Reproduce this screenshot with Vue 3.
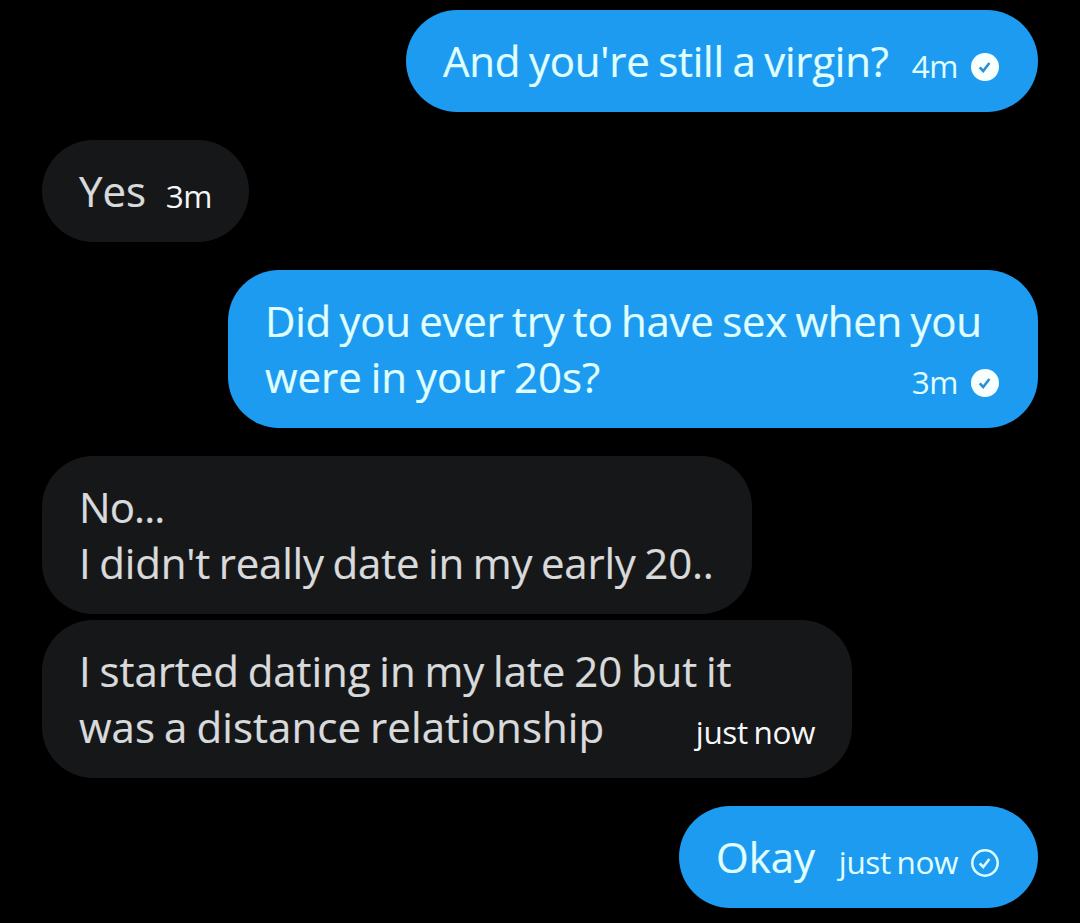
<template>
  <div class="chat">
    <!-- Messages -->
    <div
      v-for="(message, index) in messages"
      :key="index"
      class="bubble"
      :class="[message.sent ? 'sent' : 'received', { grouped: message.grouped }]"
      :style="{ width: message.width + 'px' }"
    >
      <div class="text">
        <div v-for="line in message.lines" :key="line.text">
          <span :style="{ letterSpacing: line.spacing + 'px' }">{{ line.text }}</span>
        </div>
      </div>

      <!-- Time and status -->
      <div v-if="message.time" class="meta">
        <span>{{ message.time }}</span>

        <svg v-if="message.status === 'read'" class="icon" viewBox="0 0 28 28">
          <circle cx="14" cy="14" r="14" fill="#f8ffff" />
          <path d="M8.7 14.3l3.5 3.7 6.2-8" fill="none" stroke="#2b8fd6" stroke-width="2.6" />
        </svg>

        <svg v-if="message.status === 'sent'" class="icon" viewBox="0 0 28 28">
          <circle cx="14" cy="14" r="12.7" fill="none" stroke="#e0ffff" stroke-width="2.5" />
          <path d="M8.7 14.3l3.5 3.7 6.2-8" fill="none" stroke="#e0ffff" stroke-width="2.6" />
        </svg>
      </div>
    </div>
  </div>
</template>

<script setup>
import { ref } from "vue";

// Messages Array
const messages = ref([
  {
    sent: true,
    width: 632,
    lines: [{ text: "And you're still a virgin?", spacing: -0.24 }],
    time: "4m",
    status: "read",
  },
  {
    sent: false,
    width: 207,
    lines: [{ text: "Yes", spacing: 0 }],
    time: "3m",
  },
  {
    sent: true,
    width: 810,
    lines: [
      { text: "Did you ever try to have sex when you", spacing: -0.3 },
      { text: "were in your 20s?", spacing: -0.02 },
    ],
    time: "3m",
    status: "read",
  },
  {
    sent: false,
    width: 710,
    lines: [
      { text: "No...", spacing: -0.9 },
      { text: "I didn't really date in my early 20..", spacing: -0.2 },
    ],
  },
  {
    sent: false,
    grouped: true,
    width: 810,
    lines: [
      { text: "I started dating in my late 20 but it", spacing: -0.06 },
      { text: "was a distance relationship", spacing: 0.07 },
    ],
    time: "just now",
  },
  {
    sent: true,
    width: 359,
    lines: [{ text: "Okay", spacing: 0 }],
    time: "just now",
    status: "sent",
  },
]);
</script>

<style>
body {
  background: #000;
}
</style>

<style scoped>
.chat {
  display: flex;
  flex-direction: column;
  box-sizing: border-box;
  height: 923px;
  padding: 10px 42px 15px;
  background: #000;
  font-family: "Open Sans", "Noto Sans", sans-serif;
  word-spacing: -2px;
  overflow: hidden;
}

.bubble {
  display: flex;
  justify-content: space-between;
  align-items: flex-end;
  flex-shrink: 0;
  box-sizing: border-box;
  margin-bottom: 28px;
  padding: 23px 37px;
  border-radius: 51px;
  white-space: nowrap;
}

.bubble:has(+ .grouped) {
  margin-bottom: 6px;
}

.sent {
  align-self: flex-end;
  padding-right: 39px;
  background: #1d9bf0;
  color: #e0ffff;
}

.received {
  align-self: flex-start;
  background: #161719;
  color: #d9dadb;
}

.text {
  width: 0;
  font-size: 42px;
  line-height: 56px;
  -webkit-text-stroke: 0.2px currentColor;
}

.meta {
  display: flex;
  align-items: center;
  height: 44px;
  font-size: 31.5px;
  line-height: 42px;
  letter-spacing: -0.4px;
}

.meta span {
  height: 44px;
}

.received .meta {
  color: #f5f6f7;
}

.icon {
  width: 28px;
  height: 28px;
  margin-left: 13px;
}
</style>
